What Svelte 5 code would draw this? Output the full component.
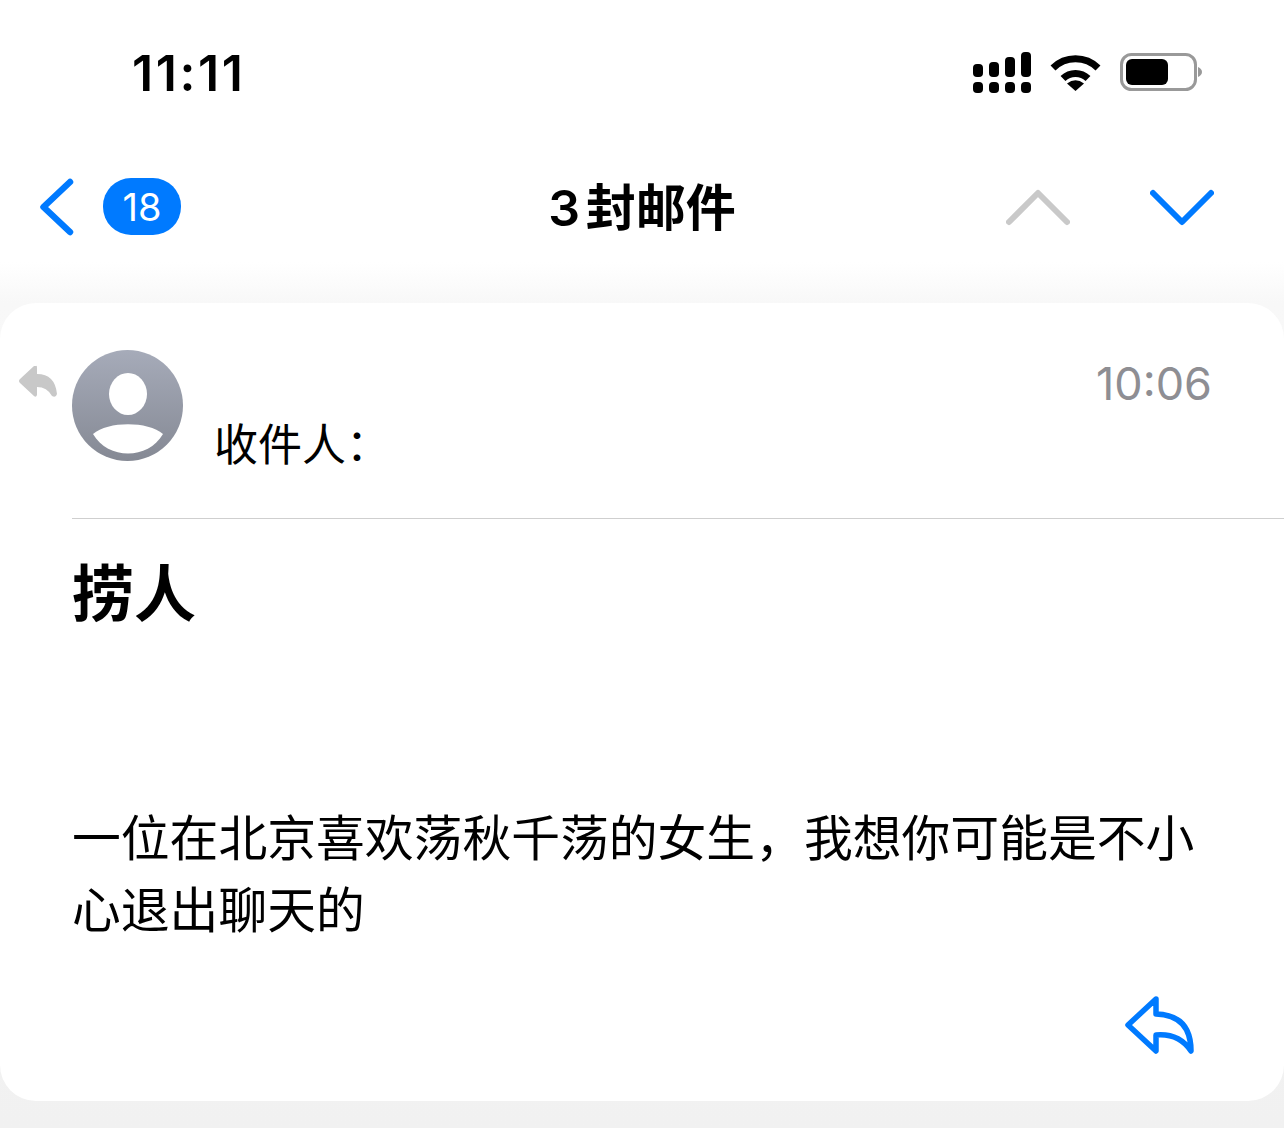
<script>
    const bodyText = "一位在北京喜欢荡秋千荡的女生，我想你可能是不小心退出聊天的";
    const signalBars = [
        { x: 0, y: 12, h: 13 },
        { x: 16, y: 10, h: 15 },
        { x: 32, y: 5, h: 20 },
        { x: 48, y: 0, h: 25 }
    ];
</script>

<div class="page">
    <div class="status">
        <span class="clock">11:11</span>
        <div class="status-icons">
            <svg width="58" height="41" viewBox="0 0 58 41">
                {#each signalBars as bar}
                    <rect x={bar.x} y={bar.y} width="10" height={bar.h} rx="4" fill="#000" />
                    <rect x={bar.x} y="30" width="10" height="11" rx="4" fill="#000" />
                {/each}
            </svg>
            <svg width="51" height="37" viewBox="0 0 51 37">
                <path d="M3 14 A32 32 0 0 1 48 14" fill="none" stroke="#000" stroke-width="7" />
                <path d="M13 24.5 A18 18 0 0 1 38 24.5" fill="none" stroke="#000" stroke-width="7" />
                <path d="M25.5 37 L17 29.5 Q25.5 23 34 29.5 Z" fill="#000" />
            </svg>
            <svg width="82" height="38" viewBox="0 0 82 38">
                <rect x="1.5" y="1.5" width="74" height="35" rx="10" fill="none" stroke="#999" stroke-width="3" />
                <rect x="6" y="6" width="42" height="26" rx="6" fill="#000" />
                <path d="M78 14 Q82 16 82 19 Q82 22 78 24 Z" fill="#999" />
            </svg>
        </div>
    </div>

    <div class="nav">
        <div class="nav-left">
            <svg width="34" height="58" viewBox="0 0 34 58">
                <path d="M30 4 L3.5 29 L30 54" fill="none" stroke="#007aff" stroke-width="6.5" stroke-linecap="round" stroke-linejoin="round" />
            </svg>
            <span class="badge">18</span>
        </div>
        <div class="title">3 封邮件</div>
        <div class="nav-right">
            <svg width="64" height="38" viewBox="0 0 64 38">
                <path d="M3 34 L32 5 L61 34" fill="none" stroke="#c9c9c9" stroke-width="6" stroke-linecap="round" stroke-linejoin="round" />
            </svg>
            <svg width="64" height="38" viewBox="0 0 64 38">
                <path d="M3 5 L32 34 L61 5" fill="none" stroke="#007aff" stroke-width="6" stroke-linecap="round" stroke-linejoin="round" />
            </svg>
        </div>
    </div>

    <div class="card">
        <div class="head">
            <svg class="replied" width="38" height="33" viewBox="0 0 38 33">
                <path d="M17 1 Q18 0 18 3 L18 9 Q36 9 38 29 Q37 33 33 31 Q28 22 18 22 L18 30 Q17 33 15 31 L1 18 Q-1 16 1 14 L15 1 Z" fill="#c8c8c8" />
            </svg>
            <svg class="avatar" width="111" height="111" viewBox="0 0 111 111">
                <defs>
                    <linearGradient id="av" x1="0" y1="0" x2="0" y2="1">
                        <stop offset="0" stop-color="#a6abb9" />
                        <stop offset="1" stop-color="#858994" />
                    </linearGradient>
                </defs>
                <circle cx="55.5" cy="55.5" r="55.5" fill="url(#av)" />
                <ellipse cx="56" cy="44" rx="19" ry="21" fill="#fff" />
                <path d="M21 84 C36 71 76 71 91 84 C76 110 36 110 21 84 Z" fill="#fff" />
            </svg>
            <div class="to">收件人：</div>
            <div class="time">10:06</div>
        </div>
        <div class="rule"></div>
        <h1 class="subject">捞人</h1>
        <p class="content">{bodyText}</p>
        <div class="foot">
            <svg width="69" height="58" viewBox="0 0 69 58">
                <path d="M31 3 L3 29 L31 55 L31 39 Q54 37 66 55 Q66 19 31 18 Z" fill="none" stroke="#007aff" stroke-width="5.5" stroke-linejoin="round" />
            </svg>
        </div>
    </div>
</div>

<style>
    :global(body) {
        margin: 0;
        background: #f2f2f2;
    }

    .page {
        height: 1128px;
        overflow: hidden;
        box-sizing: border-box;
        font-family: "Inter", "Noto Sans CJK SC", sans-serif;
        background: linear-gradient(to bottom, #fff 0, #fff 262px, #f8f8f8 303px, #f1f1f1 1128px);
    }

    .status {
        height: 146px;
        display: flex;
        align-items: center;
        justify-content: space-between;
        padding: 0 82px 0 132px;
    }

    .clock {
        font-size: 50px;
        font-weight: 600;
        letter-spacing: 2.6px;
        color: #000;
    }

    .status-icons {
        display: flex;
        align-items: center;
        gap: 19px;
        padding-bottom: 2px;
    }

    .nav {
        height: 122px;
        display: grid;
        grid-template-columns: 1fr auto 1fr;
        align-items: center;
        padding: 0 70px;
    }

    .nav-left {
        display: flex;
        align-items: center;
        gap: 29px;
        margin-left: -30px;
    }

    .nav-right {
        display: flex;
        justify-content: flex-end;
        gap: 80px;
    }

    .badge {
        width: 78px;
        height: 57px;
        margin-top: -1px;
        border-radius: 28px;
        background: #007aff;
        color: #fff;
        font-size: 38px;
        display: flex;
        align-items: center;
        justify-content: center;
    }

    .title {
        font-size: 50px;
        font-weight: 600;
        line-height: 60px;
        margin-top: 2px;
        word-spacing: -7px;
        color: #000;
    }

    .card {
        margin-top: 35px;
        height: 798px;
        background: #fff;
        border-radius: 36px;
        display: flex;
        flex-direction: column;
    }

    .head {
        display: flex;
        padding: 47px 72px 50px 19px;
        align-items: flex-start;
    }

    .replied {
        margin: 15px 15px 0 0;
    }

    .to {
        margin: 72px 0 0 31px;
        font-size: 44px;
        line-height: 46px;
        color: #000;
    }

    .time {
        margin: 6px 0 0 auto;
        font-size: 45px;
        line-height: 56px;
        color: #8e8e93;
    }

    .rule {
        height: 1px;
        margin-left: 72px;
        background: #cfcfcf;
    }

    .subject {
        margin: 39px 72px 0;
        font-size: 62px;
        line-height: 74px;
        font-weight: 700;
        color: #000;
    }

    .content {
        margin: 171px 72px 0 72px;
        font-size: 48.8px;
        line-height: 72px;
        color: #000;
    }

    .foot {
        margin-top: auto;
        padding: 0 90px 47px 0;
        display: flex;
        justify-content: flex-end;
    }
</style>
